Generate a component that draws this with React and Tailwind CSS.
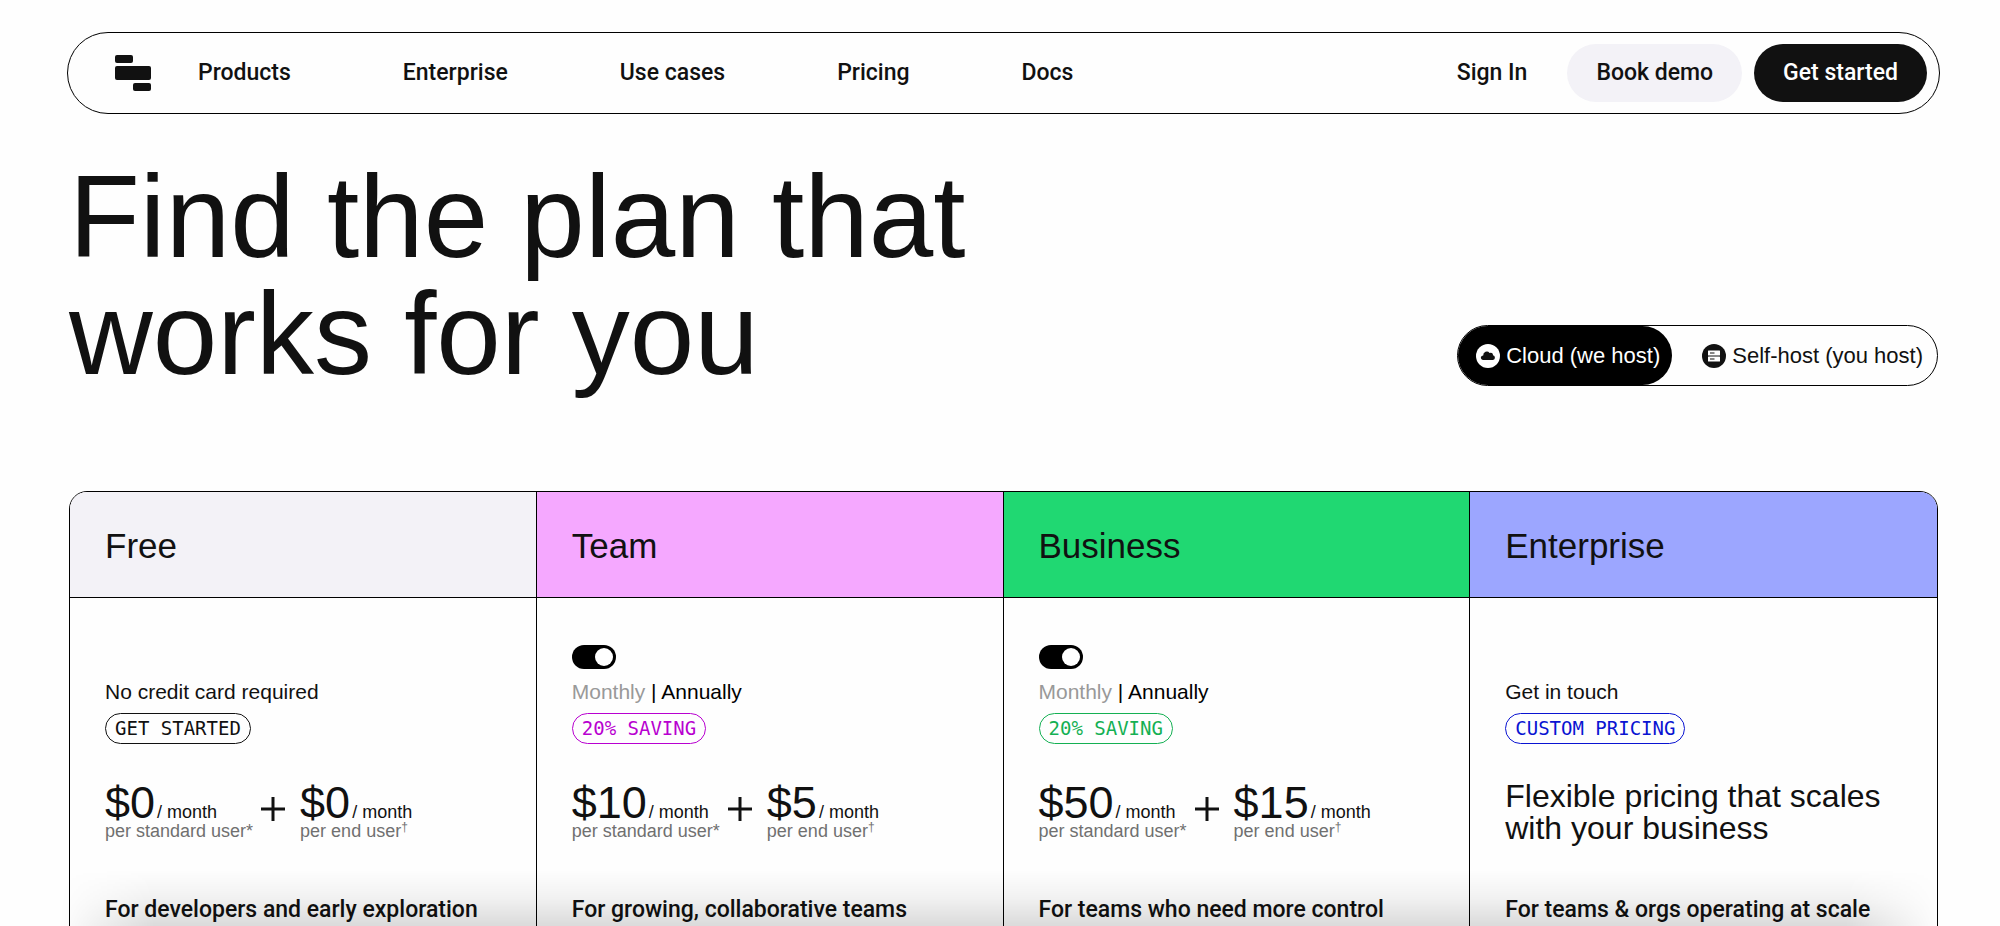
import { useState } from "react";

const navLinks = ["Products", "Enterprise", "Use cases", "Pricing", "Docs"];

const plans = [
  {
    name: "Free",
    header: "bg-[#f3f2f7]",
    note: "No credit card required",
    badge: "GET STARTED",
    badgeColor: "text-[#111111] border-[#111111]",
    standard: "$0",
    endUser: "$0",
    audience: "For developers and early exploration",
  },
  {
    name: "Team",
    header: "bg-[#f5a8ff]",
    billing: true,
    badge: "20% SAVING",
    badgeColor: "text-[#b800d0] border-[#b800d0]",
    standard: "$10",
    endUser: "$5",
    audience: "For growing, collaborative teams",
  },
  {
    name: "Business",
    header: "bg-[#20d872]",
    billing: true,
    badge: "20% SAVING",
    badgeColor: "text-[#14b053] border-[#14b053]",
    standard: "$50",
    endUser: "$15",
    audience: "For teams who need more control",
  },
  {
    name: "Enterprise",
    header: "bg-[#9ca6ff]",
    note: "Get in touch",
    badge: "CUSTOM PRICING",
    badgeColor: "text-[#0a14d2] border-[#0a14d2]",
    pitch: "Flexible pricing that scales with your business",
    audience: "For teams & orgs operating at scale",
  },
];

function Logo() {
  return (
    <svg width="36" height="36" viewBox="0 0 36 36" fill="#111111" aria-hidden="true">
      <rect x="0" y="0" width="18" height="8" rx="2" />
      <rect x="0" y="11" width="36" height="14" rx="2" />
      <rect x="18" y="28" width="18" height="8" rx="2" />
    </svg>
  );
}

function CloudIcon() {
  return (
    <svg width="24" height="24" viewBox="0 0 24 24" aria-hidden="true">
      <circle cx="12" cy="12" r="12" fill="#ffffff" />
      <path
        d="M7 16A2.3 2.3 0 0 1 5.4 12.2Q6.4 11.4 7.2 11.4A3.6 3.6 0 0 1 13.6 8.9A2.4 2.4 0 0 1 17 11.3A2.4 2.4 0 0 1 17 16Z"
        fill="#111111"
      />
    </svg>
  );
}

function ServerIcon() {
  return (
    <svg width="24" height="24" viewBox="0 0 24 24" aria-hidden="true">
      <circle cx="12" cy="12" r="12" fill="#111111" />
      <rect x="6" y="6.5" width="12" height="5" rx="0.5" fill="#ffffff" />
      <rect x="6" y="12.5" width="12" height="5" rx="0.5" fill="#ffffff" />
      <path d="M8 9h4.5M8 15h4.5" stroke="#111111" strokeWidth="1.2" />
    </svg>
  );
}

function Navbar() {
  return (
    <header className="flex items-center h-[82px] pl-[47px] pr-3 border border-black rounded-full font-['Roboto',sans-serif] text-[23px] font-medium">
      <a href="#home" aria-label="Home">
        <Logo />
      </a>
      <nav className="flex items-center gap-28 ml-[47px]">
        {navLinks.map((link) => (
          <a key={link} href={`#${link}`}>
            {link}
          </a>
        ))}
      </nav>
      <div className="flex items-center gap-3 ml-auto">
        <a href="#sign-in" className="mr-7">
          Sign In
        </a>
        <button className="h-[58px] px-[29px] rounded-full bg-[#f3f2f7]">Book demo</button>
        <button className="h-[58px] px-[29px] rounded-full bg-[#111111] text-white">Get started</button>
      </div>
    </header>
  );
}

function HostingSwitch() {
  return (
    <div className="flex h-[61px] mb-[7px] border border-black rounded-full overflow-hidden text-[22px]">
      <button className="flex items-center gap-1.5 pl-[18px] pr-3 rounded-r-full bg-black text-white">
        <CloudIcon />
        Cloud (we host)
      </button>
      <button className="flex items-center gap-1.5 pl-[30px] pr-3.5">
        <ServerIcon />
        Self-host (you host)
      </button>
    </div>
  );
}

function BillingToggle({ plan }) {
  const [annual, setAnnual] = useState(true);

  return (
    <div>
      <input
        type="checkbox"
        role="switch"
        aria-label={`${plan} annual billing`}
        checked={annual}
        onChange={(e) => setAnnual(e.target.checked)}
        className="block appearance-none w-11 h-6 rounded-full bg-black p-[3px] before:block before:size-[18px] before:rounded-full before:bg-white checked:before:ml-5"
      />
      <p className="mt-2 text-[21px] leading-[30px] text-black">
        <span className={annual ? "text-[#999999]" : ""}>Monthly</span> |{" "}
        <span className={annual ? "" : "text-[#999999]"}>Annually</span>
      </p>
    </div>
  );
}

function Price({ amount, children }) {
  return (
    <div>
      <p className="text-[45px] leading-9">
        {amount}
        <span className="ml-0.5 text-lg leading-4">/ month</span>
      </p>
      <p className="text-lg leading-5 text-[#707070]">{children}</p>
    </div>
  );
}

function PlanCard({ plan }) {
  return (
    <section className="border-r border-black last:border-r-0">
      <h2 className={`flex items-center h-[106px] px-[35px] pt-1 border-b border-black text-[35px] ${plan.header}`}>
        {plan.name}
      </h2>
      <div className="px-[35px] pt-[47px] pb-20">
        <div className="flex flex-col justify-end h-[62px]">
          {plan.billing ? (
            <BillingToggle plan={plan.name} />
          ) : (
            <p className="text-[21px] leading-[30px]">{plan.note}</p>
          )}
        </div>
        <span
          className={`inline-flex items-center h-[31px] mt-1.5 px-[9px] border rounded-full font-['DejaVu_Sans_Mono',monospace] text-[19px] ${plan.badgeColor}`}
        >
          {plan.badge}
        </span>
        <div className="h-[114px] mt-9">
          {plan.pitch ? (
            <p className="text-[32px] leading-8">{plan.pitch}</p>
          ) : (
            <div className="flex items-start pt-[5px]">
              <Price amount={plan.standard}>per standard user*</Price>
              <svg width="24" height="24" viewBox="0 0 24 24" className="mt-3 ml-2 mr-[15px]" aria-label="plus">
                <path d="M12 0v24M0 12h24" stroke="#111111" strokeWidth="3" />
              </svg>
              <Price amount={plan.endUser}>
                per end user<sup className="text-xs">†</sup>
              </Price>
            </div>
          )}
        </div>
        <h3 className="font-['Roboto',sans-serif] text-[23px] leading-8 font-medium">{plan.audience}</h3>
      </div>
    </section>
  );
}

export default function App() {
  return (
    <div className="relative h-screen overflow-hidden bg-[#fefefe] text-[#111111] font-['Liberation_Sans',Arial,sans-serif]">
      <div className="pl-[67px] pt-8 pr-[60px]">
        <Navbar />
        <div className="flex items-end justify-between mt-[45px] ml-0.5 mr-0.5">
          <h1 className="text-[116px] leading-[117px]">
            Find the plan that
            <br />
            works for you
          </h1>
          <HostingSwitch />
        </div>
        <main className="grid grid-cols-4 mt-[98px] mx-0.5 border border-black rounded-t-[18px] overflow-hidden">
          {plans.map((plan) => (
            <PlanCard key={plan.name} plan={plan} />
          ))}
        </main>
      </div>

      {/* Fade along the bottom edge */}
      <div className="absolute inset-x-[60px] bottom-0 h-14 bg-linear-to-t from-black/14 via-black/5 to-transparent mask-[linear-gradient(to_right,transparent,black_5%,black_95%,transparent)] pointer-events-none" />
    </div>
  );
}
